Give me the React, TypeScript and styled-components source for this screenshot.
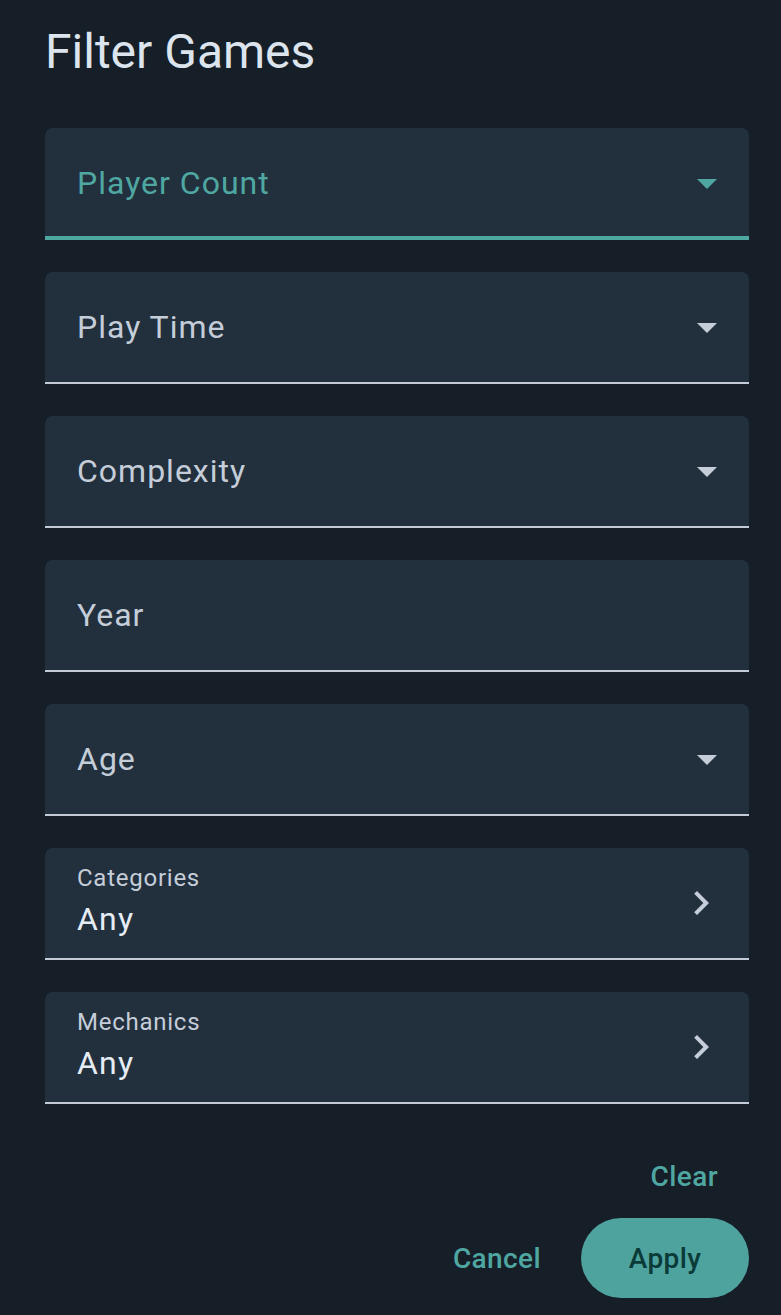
import React from "react";
import styled, { createGlobalStyle } from "styled-components";

const Global = createGlobalStyle`
  html, body { margin: 0; padding: 0; background: #161e28; }
  body { font-family: Roboto, "Noto Sans", "Liberation Sans", sans-serif; -webkit-font-smoothing: antialiased; }
  * { box-sizing: border-box; }
`;

const Page = styled.div`
  width: 781px;
  min-height: 1315px;
  background: #161e28;
  padding: 20px 32px 0 45px;
  display: flex;
  flex-direction: column;
`;

const Title = styled.h1`
  margin: 0 0 44px 0;
  font-size: 48px;
  line-height: 64px;
  font-weight: 400;
  color: #dce4ee;
  letter-spacing: 0;
`;

const Fields = styled.div`
  display: flex;
  flex-direction: column;
  gap: 32px;
`;

const Field = styled.div<{ $focused?: boolean }>`
  height: 112px;
  background: #22303e;
  border-radius: 8px 8px 0 0;
  border-bottom: ${(p) => (p.$focused ? "4px solid #4fa7a1" : "2px solid #c3cad6")};
  display: flex;
  align-items: center;
  padding: 0 18px 0 32px;
`;

const FieldLabel = styled.span<{ $focused?: boolean }>`
  flex: 1;
  font-size: 32px;
  line-height: 40px;
  letter-spacing: 1px;
  color: ${(p) => (p.$focused ? "#4fa7a1" : "#c5cdd9")};
  margin-top: ${(p) => (p.$focused ? "2px" : "0")};
`;

const IconBox = styled.span<{ $offset?: number }>`
  width: 48px;
  height: 48px;
  display: flex;
  margin-top: ${(p) => p.$offset ?? 0}px;
`;

const NavField = styled(Field)`
  align-items: stretch;
  padding-right: 24px;
`;

const NavText = styled.div`
  flex: 1;
  display: flex;
  flex-direction: column;
  padding-top: 18px;
`;

const SmallLabel = styled.span`
  font-size: 24px;
  line-height: 24px;
  letter-spacing: 0.75px;
  color: #c5cdd9;
`;

const Value = styled.span`
  margin-top: 13px;
  font-size: 32px;
  line-height: 32px;
  letter-spacing: 1.2px;
  color: #e6ecf3;
`;

const NavIcon = styled.span`
  align-self: center;
  width: 48px;
  height: 48px;
  display: flex;
`;

const ClearRow = styled.div`
  display: flex;
  justify-content: flex-end;
  margin-top: 36px;
  padding-right: 15px;
`;

const TextButton = styled.button`
  background: none;
  border: none;
  font-family: inherit;
  font-size: 28px;
  font-weight: 500;
  letter-spacing: 0.4px;
  color: #4fa7a1;
  height: 72px;
  padding: 0 16px;
  cursor: pointer;
`;

const ActionRow = styled.div`
  display: flex;
  justify-content: flex-end;
  align-items: center;
  gap: 24px;
  margin-top: 6px;
`;

const PillButton = styled.button`
  width: 168px;
  height: 80px;
  border-radius: 40px;
  border: none;
  background: #4fa39e;
  color: #0b3b39;
  font-family: inherit;
  font-size: 28px;
  font-weight: 500;
  letter-spacing: 0.4px;
  cursor: pointer;
`;

const DropArrow = ({ color }: { color: string }) => (
  <svg width="48" height="48" viewBox="0 0 24 24">
    <path d="M7 10l5 5 5-5z" fill={color} />
  </svg>
);

const Chevron = () => (
  <svg width="48" height="48" viewBox="0 0 24 24">
    <path d="M10 6 8.59 7.41 13.17 12l-4.58 4.59L10 18l6-6z" fill="#c5cdd9" />
  </svg>
);

type SelectProps = { label: string; focused?: boolean; arrow?: boolean };

const SelectField = ({ label, focused, arrow = true }: SelectProps) => (
  <Field $focused={focused}>
    <FieldLabel $focused={focused}>{label}</FieldLabel>
    {arrow && (
      <IconBox $offset={focused ? 2 : 0}>
        <DropArrow color={focused ? "#4fa7a1" : "#c5cdd9"} />
      </IconBox>
    )}
  </Field>
);

const LinkField = ({ label, value }: { label: string; value: string }) => (
  <NavField>
    <NavText>
      <SmallLabel>{label}</SmallLabel>
      <Value>{value}</Value>
    </NavText>
    <NavIcon>
      <Chevron />
    </NavIcon>
  </NavField>
);

export default function App() {
  return (
    <>
      <Global />
      <Page>
        <Title>Filter Games</Title>
        <Fields>
          <SelectField label="Player Count" focused />
          <SelectField label="Play Time" />
          <SelectField label="Complexity" />
          <SelectField label="Year" arrow={false} />
          <SelectField label="Age" />
          <LinkField label="Categories" value="Any" />
          <LinkField label="Mechanics" value="Any" />
        </Fields>
        <ClearRow>
          <TextButton>Clear</TextButton>
        </ClearRow>
        <ActionRow>
          <TextButton>Cancel</TextButton>
          <PillButton>Apply</PillButton>
        </ActionRow>
      </Page>
    </>
  );
}
